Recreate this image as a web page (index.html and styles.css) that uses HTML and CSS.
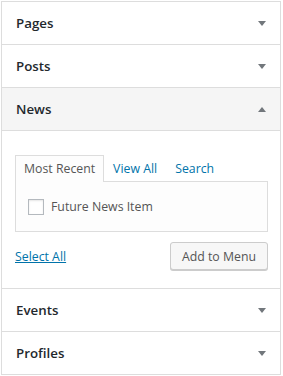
FILE: index.html
```html
<!DOCTYPE html>
<html lang="en">
<head>
    <meta charset="UTF-8">
    <meta name="viewport" content="width=device-width, initial-scale=1.0">
    <title>Add Menu Items</title>
    <link rel="stylesheet" href="styles.css">
</head>
<body>
    <div class="menu-box">
        <div class="section">
            <h3 class="section-title">Pages <span class="arrow"></span></h3>
        </div>
        <div class="section">
            <h3 class="section-title">Posts <span class="arrow"></span></h3>
        </div>
        <div class="section open">
            <h3 class="section-title">News <span class="arrow"></span></h3>
            <div class="section-content">
                <ul class="tabs">
                    <li class="tab active">Most Recent</li>
                    <li class="tab"><a href="#">View All</a></li>
                    <li class="tab"><a href="#">Search</a></li>
                </ul>
                <div class="tab-panel">
                    <label class="item">
                        <input type="checkbox">
                        <span>Future News Item</span>
                    </label>
                </div>
                <div class="actions">
                    <a href="#" class="select-all">Select All</a>
                    <button type="button">Add to Menu</button>
                </div>
            </div>
        </div>
        <div class="section">
            <h3 class="section-title">Events <span class="arrow"></span></h3>
        </div>
        <div class="section">
            <h3 class="section-title">Profiles <span class="arrow"></span></h3>
        </div>
    </div>
</body>
</html>
```

FILE: styles.css
```css
body {
    margin: 0;
    padding: 1px 0 0 1px;
    background: #fff;
    font-family: "Open Sans", "Noto Sans", sans-serif;
    font-size: 12.3px;
    color: #555;
}
.menu-box {
    width: 278px;
    border: 1px solid #ddd;
    border-bottom: none;
}
.section {
    border-bottom: 1px solid #ddd;
}
.section-title {
    display: flex;
    justify-content: space-between;
    align-items: center;
    margin: 0;
    height: 42px;
    padding: 0 14px;
    font-size: 13.3px;
    font-weight: 600;
    color: #23282d;
}
.arrow {
    width: 0;
    height: 0;
    border-left: 4px solid transparent;
    border-right: 4px solid transparent;
    border-top: 5px solid #72777c;
}
.open .section-title {
    background: #f5f5f5;
    border-bottom: 1px solid #ddd;
}
.open .arrow {
    border-top: none;
    border-bottom: 5px solid #72777c;
}
.section-content {
    padding: 24px 12px 18px 13px;
}
.tabs {
    display: flex;
    margin: 0;
    padding: 0;
    list-style: none;
}
.tab {
    padding: 4px 8px 4px;
    line-height: 17px;
    border: 1px solid transparent;
    border-bottom: none;
}
.tab a {
    color: #0073aa;
    text-decoration: none;
}
.tab.active {
    background: #fdfdfd;
    border-color: #ddd;
    color: #555;
    margin-bottom: -1px;
    position: relative;
}
.tab-panel {
    background: #fdfdfd;
    border: 1px solid #ddd;
    height: 49px;
    padding: 0 12px;
    display: flex;
    align-items: center;
}
.item {
    display: flex;
    align-items: center;
    gap: 7px;
}
.item input {
    appearance: none;
    margin: 0;
    width: 16px;
    height: 16px;
    border: 1px solid #b4b9be;
    background: #fff;
    box-shadow: inset 0 1px 2px rgba(0,0,0,0.1);
}
.actions {
    display: flex;
    justify-content: space-between;
    align-items: center;
    margin-top: 10px;
}
.select-all {
    color: #0073aa;
    text-decoration: underline;
}
button {
    font-family: inherit;
    font-size: 12.3px;
    color: #555;
    background: #f7f7f7;
    border: 1px solid #ccc;
    border-radius: 3px;
    box-shadow: 0 1px 0 #ccc;
    height: 28px;
    width: 98px;
    padding: 0;
}
```
